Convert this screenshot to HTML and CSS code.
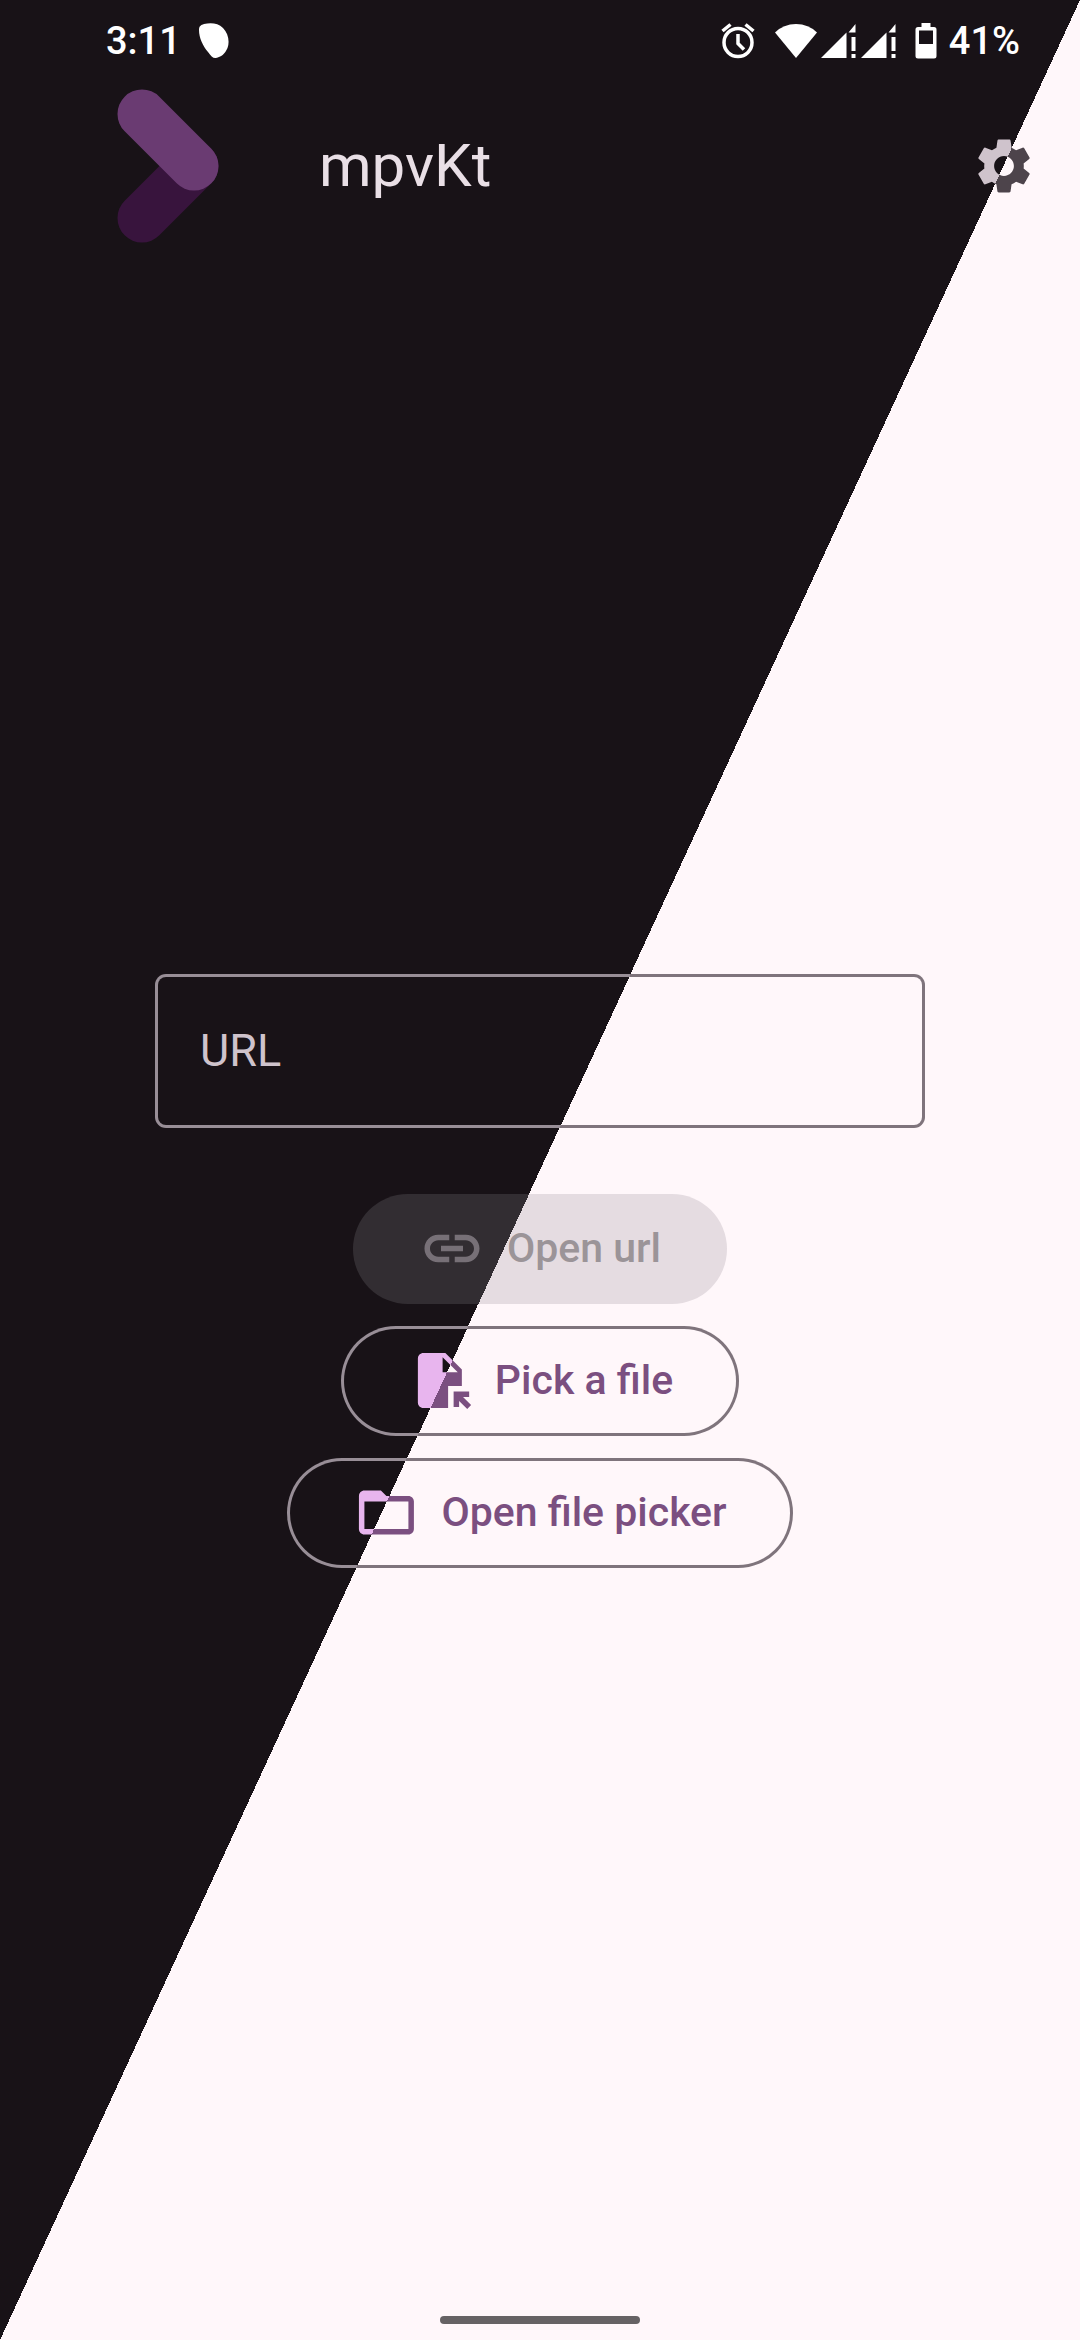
FILE: index.html
```html
<!DOCTYPE html>
<html lang="en">
<head>
<meta charset="utf-8">
<meta name="viewport" content="width=device-width">
<title>mpvKt</title>
<link rel="stylesheet" href="styles.css">
</head>
<body>
<svg class="defs" width="0" height="0" aria-hidden="true">
  <defs>
    <clipPath id="icon-settings"><path transform="scale(2.75)" clip-rule="evenodd" d="M19.14,12.94c0.04-0.3,0.06-0.61,0.06-0.94c0-0.32-0.02-0.64-0.07-0.94l2.03-1.58c0.18-0.14,0.23-0.41,0.12-0.61l-1.92-3.32c-0.12-0.22-0.37-0.29-0.59-0.22l-2.39,0.96c-0.5-0.38-1.03-0.7-1.62-0.94L14.4,2.81c-0.04-0.24-0.24-0.41-0.48-0.41h-3.84c-0.24,0-0.43,0.17-0.47,0.41L9.25,5.35C8.66,5.59,8.12,5.92,7.63,6.29L5.24,5.33c-0.22-0.08-0.47,0-0.59,0.22L2.74,8.87C2.62,9.08,2.66,9.34,2.86,9.48l2.03,1.58C4.84,11.36,4.8,11.69,4.8,12s0.02,0.64,0.07,0.94l-2.03,1.58c-0.18,0.14-0.23,0.41-0.12,0.61l1.92,3.32c0.12,0.22,0.37,0.29,0.59,0.22l2.39-0.96c0.5,0.38,1.03,0.7,1.62,0.94l0.36,2.54c0.05,0.24,0.24,0.41,0.48,0.41h3.84c0.24,0,0.44-0.17,0.47-0.41l0.36-2.54c0.59-0.24,1.13-0.56,1.62-0.94l2.39,0.96c0.22,0.08,0.47,0,0.59-0.22l1.92-3.32c0.12-0.22,0.07-0.47-0.12-0.61L19.14,12.94z M12,15.6c-1.98,0-3.6-1.62-3.6-3.6s1.62-3.6,3.6-3.6s3.6,1.62,3.6,3.6S13.98,15.6,12,15.6z"/></clipPath>
    <clipPath id="icon-link"><path transform="scale(2.75)" d="M17,7h-4v2h4c1.65,0,3,1.35,3,3s-1.35,3-3,3h-4v2h4c2.76,0,5-2.24,5-5s-2.24-5-5-5z M11,15H7c-1.65,0-3-1.35-3-3s1.35-3,3-3h4V7H7c-2.76,0-5,2.24-5,5s2.24,5,5,5h4v-2z M8,11h8v2H8z"/></clipPath>
    <clipPath id="icon-file"><path transform="scale(2.75)" clip-rule="evenodd" d="M14,2H6C4.9,2,4.01,2.9,4.01,4L4,20c0,1.1,0.89,2,1.99,2H15v-8h5V8L14,2z M13,9V3.5L18.5,9H13z M17,21.66V16h5.66v2h-2.24l2.95,2.95l-1.41,1.41L19,19.41v2.24H17z"/></clipPath>
    <clipPath id="icon-folder"><path transform="scale(2.75)" clip-rule="evenodd" d="M20,6h-8l-2-2H4c-1.1,0-1.99,0.9-1.99,2L2,18c0,1.1,0.9,2,2,2h16c1.1,0,2-0.9,2-2V8c0-1.1-0.9-2-2-2z M20,18H4V8h16V18z"/></clipPath>
  </defs>
</svg>
<div class="screen">
  <div class="status-bar">
    <time class="status-text">3:11</time>
    <svg class="notification" width="30" height="36" viewBox="0 0 30 36" aria-hidden="true"><path d="M0 7C0 3 2 2 5 1C12-.5 19 0 24 5C29 10 31 18 28.500 25C26 31 22 34 17 35C14 35.500 12 33 9 29C4 23 0 15 0 7Z"/></svg>
    <div class="indicators">
      <svg width="34" height="36" viewBox="0 0 34 36" aria-label="Alarm"><g fill="none" stroke="#fff"><circle cx="17" cy="19.500" r="14" stroke-width="3.500"/><path stroke-width="3.500" d="M17 11v9.500l6 6M1.500 8l8-6.500M32.500 8l-8-6.500"/></g></svg>
      <svg class="wifi" width="42" height="36" viewBox="0 0 42 36" aria-label="Wi-Fi"><path d="M0 9.500Q8.500 1 21 1T42 9.500L21 35Z"/></svg>
      <svg class="signal" width="36" height="36" viewBox="0 0 36 36" aria-label="Mobile signal"><path d="M0 35L25.500 9.500V35ZM27.500 9.500L34.500 1V9.500ZM30.500 14h4v14h-4ZM30.500 31h4v4h-4Z"/></svg>
      <svg class="signal" width="36" height="36" viewBox="0 0 36 36" aria-label="Mobile signal"><path d="M0 35L25.500 9.500V35ZM27.500 9.500L34.500 1V9.500ZM30.500 14h4v14h-4ZM30.500 31h4v4h-4Z"/></svg>
      <svg class="battery" width="22" height="36" viewBox="0 0 22 36" aria-hidden="true"><path fill-rule="evenodd" d="M6.500 0h9v4H19q2.500 0 2.500 2.500V33q0 2.500-2.500 2.500H3Q.5 35.500.5 33V6.500Q.5 4 3 4H6.500ZM4 7.500V21H18V7.500Z"/></svg>
      <span class="status-text">41%</span>
    </div>
  </div>
  <header class="app-bar">
    <svg class="logo" width="102" height="154" viewBox="0 0 102 154" aria-hidden="true"><g fill="none" stroke-width="49" stroke-linecap="round"><path stroke="#38143d" d="M25 129L77 77"/><path stroke="#6a3b72" d="M25 25L77 77"/></g></svg>
    <h1 class="title">mpvKt</h1>
    <button class="icon-button" type="button" aria-label="Settings"><span class="icon settings"></span></button>
  </header>
  <main class="content">
    <input class="url" type="text" placeholder="URL" aria-label="URL">
    <div class="actions">
      <button class="button filled" type="button" disabled><span class="icon link"></span>Open url</button>
      <button class="button outlined" type="button"><span class="icon file"></span>Pick a file</button>
      <button class="button outlined" type="button"><span class="icon folder"></span>Open file picker</button>
    </div>
  </main>
  <footer class="nav-bar"><span class="handle"></span></footer>
</div>
</body>
</html>
```
FILE: styles.css
```css
/* Every two-tone colour is a viewport-sized diagonal gradient,
   so all parts change theme along the same line. */
:root {
  --surface: linear-gradient(to bottom right, #181217 50%, #fff7fa 50%);
  --outline: linear-gradient(to bottom right, #988e97 50%, #7f747c 50%);
  --primary: linear-gradient(to bottom right, #e8b5ee 50%, #7b4f80 50%);
  --variant: linear-gradient(to bottom right, #cfc3cc 50%, #4d444b 50%);
  --disabled: linear-gradient(to bottom right, #322d32 50%, #e5dce1 50%);
  --disabled-icon: linear-gradient(to bottom right, #777077 50%, #9b9498 50%);
}

* {
  box-sizing: border-box;
}

body {
  margin: 0;
  background: var(--surface) fixed;
  font-family: Roboto, "Noto Sans", sans-serif;
}

.defs {
  position: absolute;
}

.screen {
  display: flex;
  flex-direction: column;
  min-height: 100vh;
}

.status-bar {
  display: flex;
  align-items: center;
  height: 78px;
  padding: 4px 60px 0 106px;
  color: #fff;
  fill: #fff;
}

.status-text {
  font-size: 38px;
  font-weight: 500;
  line-height: 44px;
}

.notification {
  margin-left: 18px;
}

.indicators {
  display: flex;
  align-items: center;
  margin-left: auto;
}

.wifi {
  margin-left: 20px;
}

.signal {
  margin-left: 4px;
}

.battery {
  margin: 0 12px 0 18px;
}

.app-bar {
  display: flex;
  align-items: center;
  height: 176px;
  padding: 0 43px 0 117px;
}

.title {
  margin: 0 0 0 100px;
  color: #e9dfe6;
  font-size: 60px;
  font-weight: 400;
  line-height: 76px;
}

.icon-button {
  margin-left: auto;
  padding: 0;
  border: 0;
  background: none;
}

.icon {
  display: block;
  flex: none;
  width: 66px;
  height: 66px;
  background: var(--primary) fixed;
}

.settings {
  background: var(--variant) fixed;
  clip-path: url(#icon-settings);
}

.link {
  background: var(--disabled-icon) fixed;
  clip-path: url(#icon-link);
}

.file {
  clip-path: url(#icon-file);
}

.folder {
  clip-path: url(#icon-folder);
}

.content {
  display: flex;
  flex: 1;
  flex-direction: column;
  align-items: center;
  justify-content: center;
  gap: 66px;
}

.url {
  width: 770px;
  max-width: 90%;
  height: 154px;
  padding: 0 42px;
  border: 3px solid transparent;
  border-radius: 11px;
  background: var(--surface) fixed padding-box, var(--outline) fixed border-box;
  color: #cfc3cc;
  font: 400 45px/66px Roboto, "Noto Sans", sans-serif;
}

.url::placeholder {
  color: #cfc3cc;
  opacity: 1;
}

.actions {
  display: flex;
  flex-direction: column;
  align-items: center;
  gap: 22px;
}

.button {
  display: flex;
  align-items: center;
  gap: 22px;
  height: 110px;
  padding: 0 63px;
  border: 3px solid transparent;
  border-radius: 55px;
  font: 500 41px/55px Roboto, "Noto Sans", sans-serif;
}

.filled {
  background: var(--disabled) fixed border-box;
  color: #9b9498;
}

.outlined {
  background: var(--surface) fixed padding-box, var(--outline) fixed border-box;
  color: #7b4f80;
}

.nav-bar {
  display: flex;
  align-items: center;
  justify-content: center;
  height: 53px;
  padding-top: 13px;
}

.handle {
  width: 200px;
  height: 8px;
  border-radius: 4px;
  background: #666264;
}
```
